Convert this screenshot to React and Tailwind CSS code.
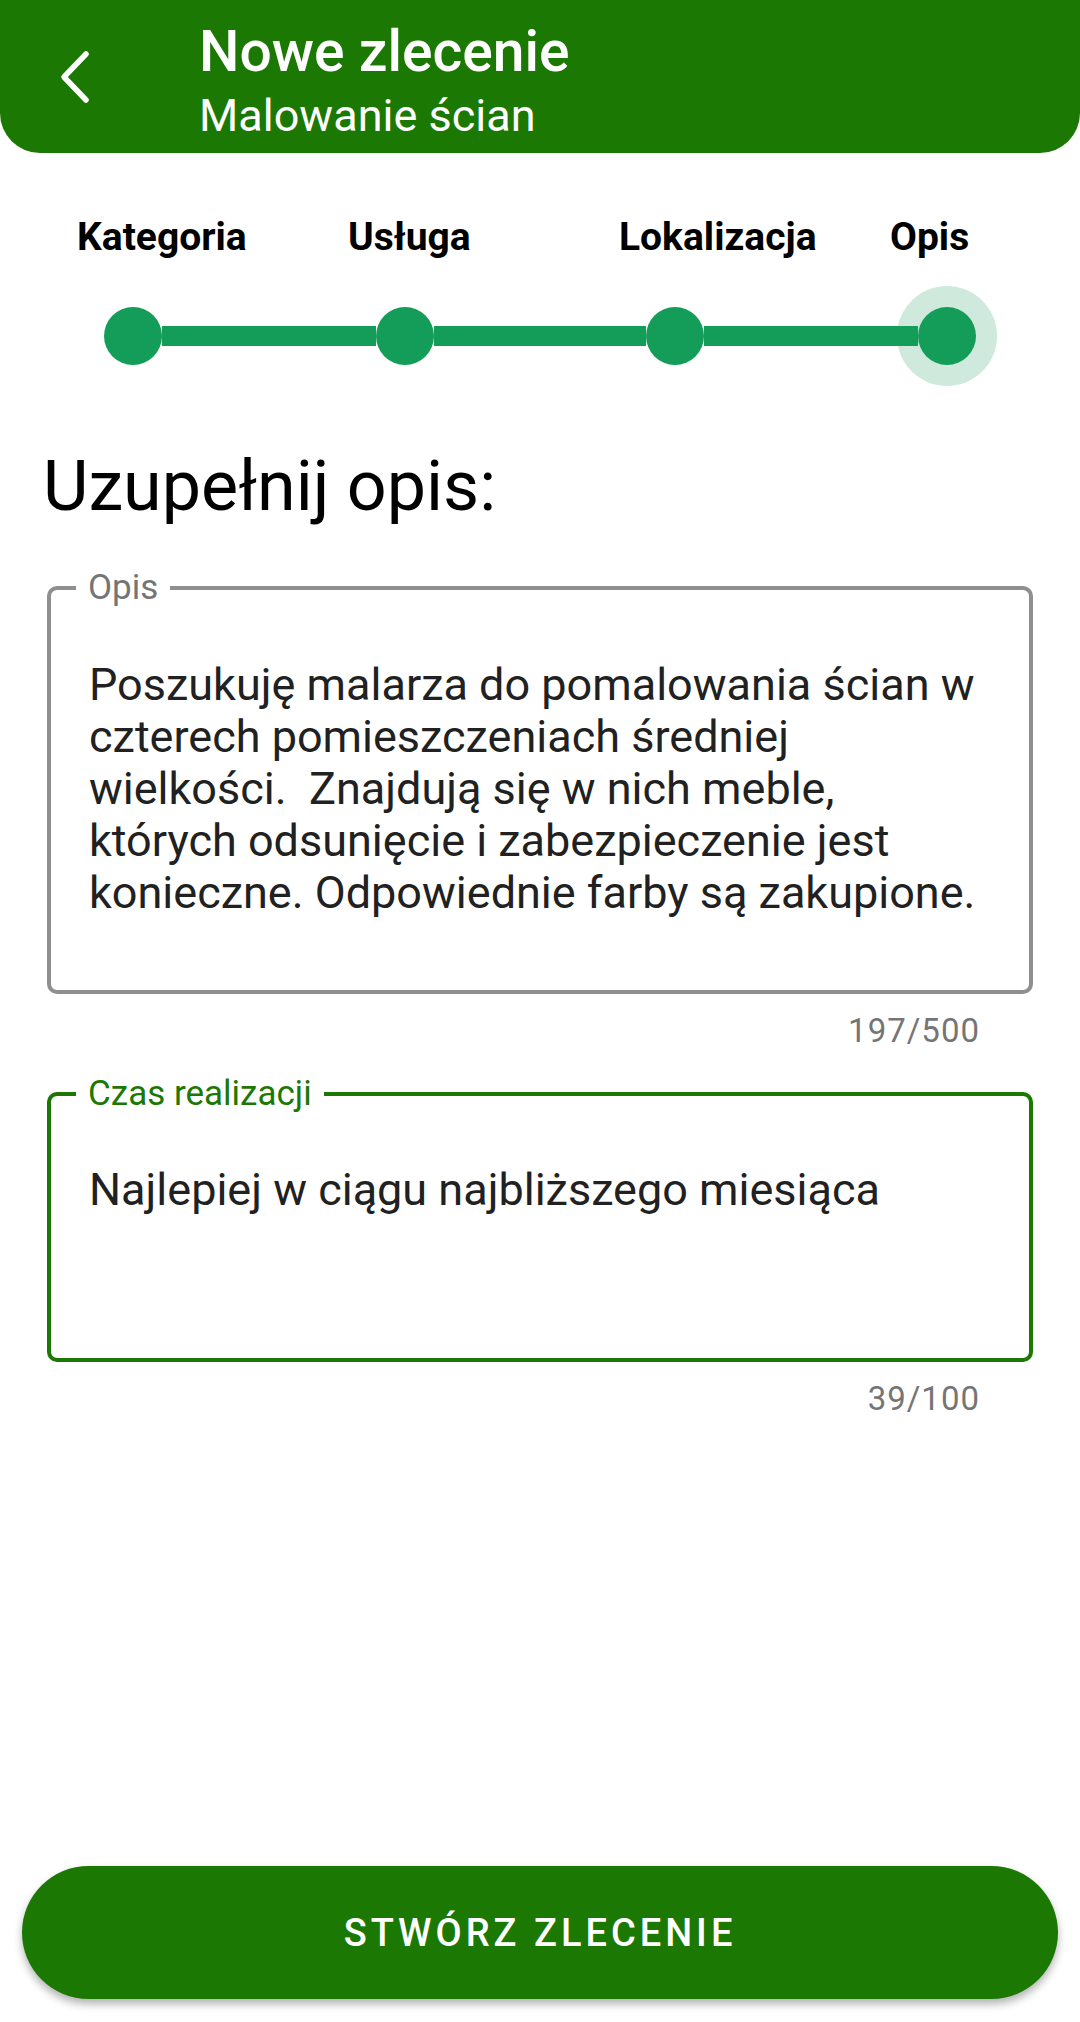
import React from "react";

function Dot({ active }) {
  return (
    <div
      className={
        active
          ? "w-[58px] h-[58px] rounded-full bg-[#139d58] shrink-0 ring-[21px] ring-[#cfeadc]"
          : "w-[58px] h-[58px] rounded-full bg-[#139d58] shrink-0"
      }
    />
  );
}

export default function App() {
  return (
    <div className="w-[1080px] h-[2022px] bg-white flex flex-col overflow-hidden font-[family-name:Roboto,'Noto_Sans',sans-serif]">
      <header className="h-[153px] bg-[#1b7802] rounded-b-[40px] flex items-start shrink-0">
        <div className="w-[199px] pl-[58px] pt-[48px] shrink-0">
          <svg width="36" height="58" viewBox="0 0 36 58" fill="none">
            <polyline
              points="28,6 6,29 28,52"
              stroke="white"
              strokeWidth="5.5"
              strokeLinecap="round"
              strokeLinejoin="round"
            />
          </svg>
        </div>
        <div className="pt-[18px] text-white">
          <div className="text-[57px] leading-[67px] font-medium">Nowe zlecenie</div>
          <div className="text-[45px] leading-[52px] mt-[5px]">Malowanie ścian</div>
        </div>
      </header>

      <div className="mt-[61px] flex pl-[77px] text-[39px] leading-[46px] font-bold text-black">
        <div className="w-[271px] shrink-0">Kategoria</div>
        <div className="w-[271px] shrink-0">Usługa</div>
        <div className="w-[271px] shrink-0">Lokalizacja</div>
        <div className="shrink-0">Opis</div>
      </div>

      <div className="mt-[26px] h-[100px] flex items-center pl-[104px]">
        <Dot />
        <div className="w-[214px] h-[20px] bg-[#139d58] shrink-0" />
        <Dot />
        <div className="w-[212px] h-[20px] bg-[#139d58] shrink-0" />
        <Dot />
        <div className="w-[214px] h-[20px] bg-[#139d58] shrink-0 relative z-10" />
        <Dot active />
      </div>

      <h1 className="mt-[60px] ml-[43px] text-[70px] leading-[80px] text-black">Uzupełnij opis:</h1>

      <div className="mt-[60px] mx-[47px] relative border-4 border-[#8f8f8f] rounded-[10px] pt-[69px] pb-[71px] pl-[38px] pr-[20px]">
        <span className="absolute left-[25px] top-[-22px] bg-white px-[12px] text-[35px] leading-[40px] text-[#757575]">
          Opis
        </span>
        <p className="text-[45px] leading-[52px] text-[#212121] whitespace-pre">
          {"Poszukuję malarza do pomalowania ścian w"}
          <br />
          {"czterech pomieszczeniach średniej"}
          <br />
          {"wielkości.  Znajdują się w nich meble,"}
          <br />
          {"których odsunięcie i zabezpieczenie jest"}
          <br />
          {"konieczne. Odpowiednie farby są zakupione."}
        </p>
      </div>
      <div className="mt-[17px] mr-[100px] text-right text-[33px] leading-[40px] tracking-[1px] text-[#757575]">
        197/500
      </div>

      <div className="mt-[41px] mx-[47px] h-[270px] relative border-4 border-[#1b7802] rounded-[10px] pt-[68px] pl-[38px] pr-[20px]">
        <span className="absolute left-[25px] top-[-22px] bg-white px-[12px] text-[35px] leading-[40px] text-[#1b7802]">
          Czas realizacji
        </span>
        <p className="text-[45px] leading-[52px] text-[#212121]">Najlepiej w ciągu najbliższego miesiąca</p>
      </div>
      <div className="mt-[17px] mr-[100px] text-right text-[33px] leading-[40px] tracking-[1px] text-[#757575]">
        39/100
      </div>

      <div className="mt-auto mb-[23px] mx-[22px] h-[133px] rounded-full bg-[#1b7802] shadow-[0_5px_8px_rgba(0,0,0,0.3)] flex items-center justify-center text-white text-[38px] leading-[46px] font-medium tracking-[4px]">
        STWÓRZ ZLECENIE
      </div>
    </div>
  );
}
